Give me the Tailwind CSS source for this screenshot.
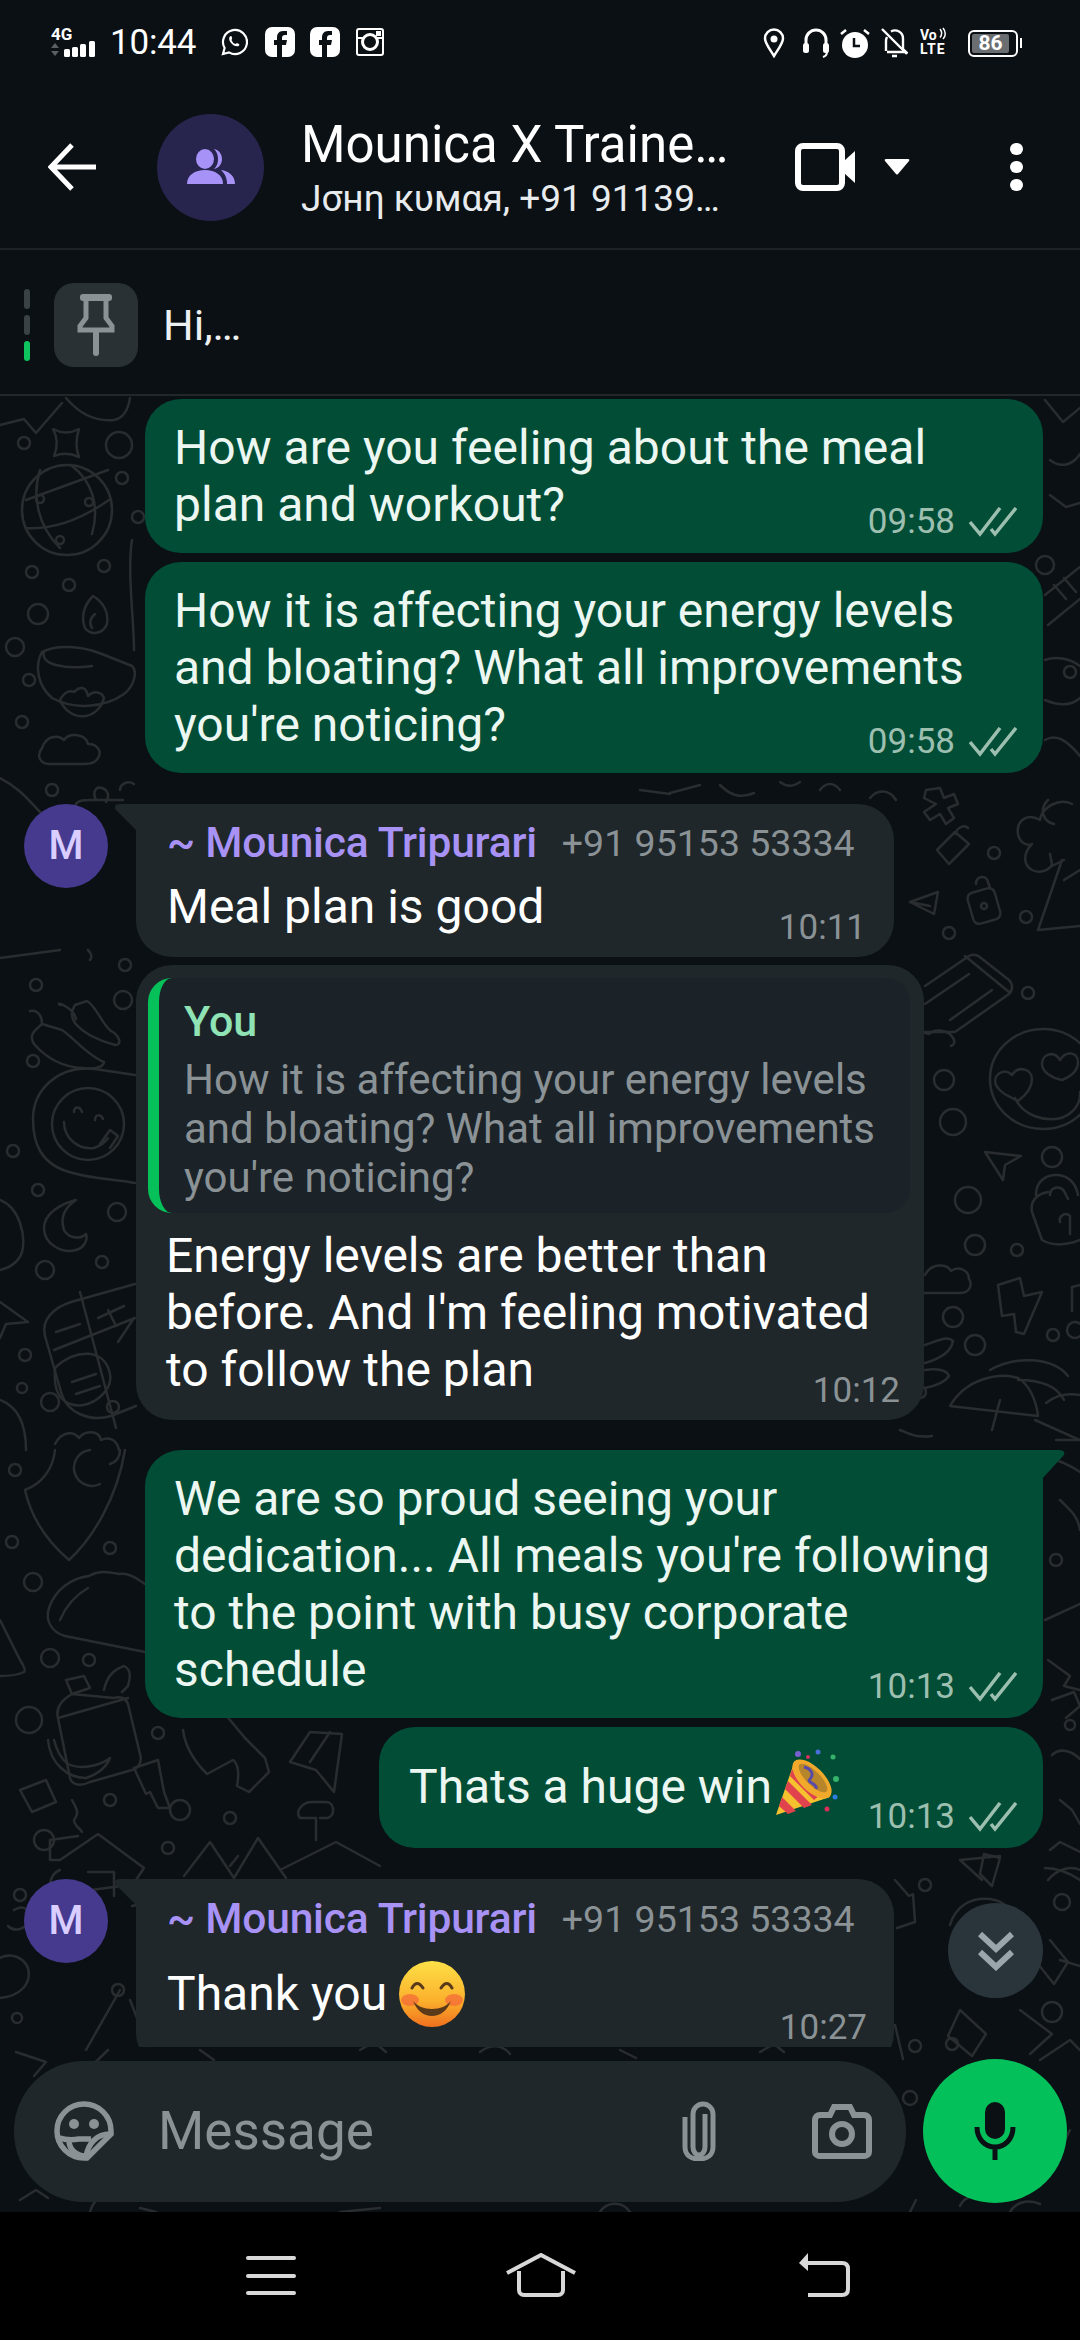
<!DOCTYPE html>
<html lang="en">
<head>
  <meta charset="UTF-8">
  <meta name="viewport" content="width=device-width,initial-scale=1">
  <title>Mounica X Trainer</title>
  <script src="https://cdn.jsdelivr.net/npm/@tailwindcss/browser@4"></script>
</head>
<body class="bg-black font-['Roboto',sans-serif] text-white">
<div class="w-[1080px] h-[2340px] overflow-hidden flex flex-col bg-[#0b1014]">

  <!-- status bar -->
  <div class="h-[60px] shrink-0 flex items-center relative pt-[18px]">
    <div class="w-[51px]"></div>
    <svg width="47" height="34" viewBox="0 0 47 34" class="mt-[4px]">
      <text x="0" y="16" font-size="17" font-weight="700" fill="#fff" font-family="Roboto">4G</text>
      <g transform="translate(0 3)">
      <path d="M4 16l4 5H0zM4 29l4-5H0z" fill="#5a5f62"/>
      <rect x="13" y="22" width="6" height="8" rx="1.5" fill="#fff"/><rect x="21" y="20" width="6" height="10" rx="1.5" fill="#fff"/><rect x="29" y="17" width="6" height="13" rx="1.5" fill="#fff"/><rect x="38" y="14" width="6" height="16" rx="1.5" fill="#fff"/>
      </g>
    </svg>
    <span class="ml-[12px] text-[35px] leading-[40px] mt-[8px] tracking-[-0.2px]">10:44</span>
    <svg width="28" height="28" viewBox="0 0 28 28" class="ml-[24px] mt-[6px]" fill="none" stroke="#fff" stroke-width="2.2">
      <path d="M3 26l1.6-6A12 12 0 1 1 9 24.4z"/><path d="M9.5 9c1-1.500 2-1 2.500.5.5 1.500-.5 2-.5 2.500a6 6 0 0 0 4 4c.5 0 1-1 2.500-.5s2 1.500.5 2.500c-4 2-11-5-9-9z" fill="#fff" stroke="none"/>
    </svg>
    <svg width="30" height="30" viewBox="0 0 30 30" class="ml-[17px] mt-[6px]"><rect width="30" height="30" rx="7" fill="#fff"/><path d="M17 30V18h4l1-5h-5v-2c0-2 1-3 3-3h2V4h-4c-4 0-6 3-6 6v3H9v5h3v12z" fill="#0b1014"/></svg>
    <svg width="30" height="30" viewBox="0 0 30 30" class="ml-[15px] mt-[6px]"><rect width="30" height="30" rx="7" fill="#fff"/><path d="M17 30V18h4l1-5h-5v-2c0-2 1-3 3-3h2V4h-4c-4 0-6 3-6 6v3H9v5h3v12z" fill="#0b1014"/></svg>
    <svg width="28" height="28" viewBox="0 0 28 28" class="ml-[16px] mt-[6px]" fill="none" stroke="#fff" stroke-width="2"><rect x="1" y="1" width="26" height="26" rx="2"/><circle cx="14" cy="14" r="7.500" stroke-width="3"/><rect x="20" y="3" width="5" height="5" fill="#fff" stroke="none"/><path d="M1 10h6M21 10h6" stroke-width="2"/></svg>

    <div class="absolute left-[763px] top-[28px] flex">
      <svg width="22" height="30" viewBox="0 0 22 30" fill="none" stroke="#fff" stroke-width="2.500"><path d="M11 28C6 20 2 15 2 10.500a9 9 0 0 1 18 0C20 15 16 20 11 28z"/><circle cx="11" cy="11" r="3.500" fill="#fff" stroke="none"/></svg>
      <svg width="26" height="30" viewBox="0 0 26 30" class="ml-[18px]" fill="none" stroke="#fff" stroke-width="3"><path d="M3 19V12a10 10 0 0 1 20 0v7"/><rect x="0" y="15" width="6" height="10" rx="2.500" fill="#fff" stroke="none"/><rect x="20" y="15" width="6" height="10" rx="2.500" fill="#fff" stroke="none"/><path d="M24 24c0 3-1 4-4 5" stroke-width="2"/></svg>
      <svg width="30" height="30" viewBox="0 0 30 30" class="ml-[11px]"><circle cx="15" cy="17" r="13" fill="#fff"/><path d="M14 10v8h6" fill="none" stroke="#0b1014" stroke-width="2.500"/><path d="M1 6l5-4M29 6l-5-4" stroke="#fff" stroke-width="2.500"/></svg>
      <svg width="27" height="30" viewBox="0 0 27 30" class="ml-[11px]" fill="none" stroke="#fff" stroke-width="2.400"><path d="M5 23V13c0-2 .5-3 1-4M10 3.500a8 8 0 0 1 12 7V21l3 3H6"/><path d="M1 1l25 25"/><path d="M11 28h5" stroke-width="2.500"/></svg>
      <svg width="28" height="33" viewBox="0 0 28 33" class="ml-[12px] mt-[-2px]"><text x="0" y="14" font-size="14" font-weight="700" fill="#fff" font-family="Roboto">Vo</text><path d="M20 3c2 2.500 2 6 0 8.500M23 2c3 3.500 3 8 0 11" fill="none" stroke="#fff" stroke-width="1.500"/><text x="0" y="28" font-size="14" font-weight="700" fill="#fff" font-family="Roboto" letter-spacing="1">LTE</text></svg>
      <div class="ml-[20px] mt-[2px] w-[50px] h-[27px] rounded-[6px] border-[2px] border-white p-[2px] relative">
        <div class="w-[37px] h-full bg-[#6b6e71] rounded-[2px] flex items-center justify-center text-[21px] leading-none font-bold">86</div>
        <div class="absolute right-[-6px] top-[6px] w-[2px] h-[10px] bg-white"></div>
      </div>
    </div>
  </div>

  <!-- chat header -->
  <div class="h-[190px] shrink-0 flex items-center border-b-[2px] border-[#1c2226] relative pt-[28px]">
    <svg width="48" height="48" viewBox="0 0 48 48" class="ml-[48px] mt-[-2px]" fill="none" stroke="#fff" stroke-width="5"><path d="M48 24H4M24 2L3 24l21 22"/></svg>
    <div class="ml-[61px] w-[107px] h-[107px] rounded-full bg-[#27244d] flex items-center justify-center mt-[-2px]">
      <svg width="48" height="36" viewBox="0 0 48 36" fill="#a793f7"><ellipse cx="18" cy="10" rx="9" ry="10"/><path d="M0 35c0-9 8-14 18-14s18 5 18 14z"/><path d="M27 0c5 1 8 5 8 10s-3 9-8 10c3-3 4-6 4-10s-1-7-4-10zM34 21c8 1 14 6 14 14h-8c0-6-2-10-6-14z"/></svg>
    </div>
    <div class="ml-[37px] w-[440px] mt-[-2px]">
      <div class="text-[51px] leading-[62px] whitespace-nowrap">Mounica X Traine…</div>
      <div class="text-[37px] leading-[42px] mt-[2px] whitespace-nowrap text-[#e8ecee]">Jσнη кυмαя, +91 91139…</div>
    </div>
    <svg width="60" height="48" viewBox="0 0 60 48" class="ml-[54px] mt-[-2px]"><rect x="3" y="3" width="44" height="42" rx="5" fill="none" stroke="#fff" stroke-width="6"/><path d="M49 18l11-10v32L49 30z" fill="#fff"/></svg>
    <svg width="26" height="16" viewBox="0 0 26 16" class="ml-[29px] mt-[-2px]"><path d="M2 0h22q2 0 1 2L14 15q-1 1-2 0L1 2Q0 0 2 0z" fill="#fff"/></svg>
    <div class="ml-[100px] mt-[-2px] flex flex-col gap-[6px]">
      <div class="w-[13px] h-[12px] rounded-full bg-white"></div>
      <div class="w-[13px] h-[12px] rounded-full bg-white"></div>
      <div class="w-[13px] h-[12px] rounded-full bg-white"></div>
    </div>
  </div>

  <!-- pinned message -->
  <div class="h-[146px] shrink-0 flex items-center border-b-[2px] border-[#22272a] pl-[24px] pt-[6px]">
    <div class="flex flex-col gap-[6px] w-[6px]">
      <div class="h-[20px] rounded-full bg-[#3a4246]"></div>
      <div class="h-[20px] rounded-full bg-[#3a4246]"></div>
      <div class="h-[20px] rounded-full bg-[#0ec45f]"></div>
    </div>
    <div class="ml-[24px] w-[84px] h-[84px] rounded-[20px] bg-[#2a3134] flex items-center justify-center">
      <svg width="38" height="62" viewBox="0 0 38 62" fill="none" stroke="#8a9296" stroke-width="5"><rect x="3" y="0" width="32" height="7" rx="3" fill="#8a9296" stroke="none"/><path d="M9 6v18l-6 8v4h32v-4l-6-8V6"/><rect x="16" y="36" width="6" height="26" rx="3" fill="#8a9296" stroke="none"/></svg>
    </div>
    <span class="ml-[25px] text-[43px] leading-[48px] text-[#eef1f2]">Hi,…</span>
  </div>

  <!-- conversation -->
  <div class="relative flex-1 min-h-0">

    <!-- wallpaper doodles, page coordinates -->
    <svg class="absolute inset-0" width="1080" height="1816" viewBox="0 396 1080 1816" fill="none" stroke="#292d30" stroke-width="2.500" stroke-linejoin="round" stroke-linecap="round">
      <!-- upper left -->
      <path d="M0 425l24-6 12 14 26-30M66 398c12 14 28 24 48 22 10-2 14-10 16-22"/>
      <path d="M53 429q13 7 26 0q-5 15 0 28q-13-6-25-1q6-14-1-27z"/>
      <circle cx="24" cy="443" r="6"/><circle cx="119" cy="445" r="13"/><circle cx="122" cy="478" r="6"/><circle cx="138" cy="517" r="6"/>
      <circle cx="67" cy="510" r="45"/><path d="M26 500l82-30M26 528c30 2 60-12 83-28M40 470c-8 25-3 55 20 78M72 466c20 15 28 40 20 68"/><circle cx="40" cy="499" r="4"/><circle cx="89" cy="502" r="4"/><circle cx="60" cy="540" r="4"/>
      <circle cx="32" cy="572" r="6"/><circle cx="104" cy="566" r="6"/><circle cx="69" cy="585" r="6"/><circle cx="38" cy="614" r="10"/><circle cx="15" cy="647" r="9"/><circle cx="29" cy="680" r="6"/><circle cx="22" cy="722" r="6"/>
      <path d="M132 540c-5 30 2 80 2 110"/>
      <path d="M93 596c-10 10-12 22-8 32 6 8 18 6 22-4 2-12-4-22-14-28z"/><path d="M95 614c-5 4-6 10-3 14"/>
      <path d="M42 652c15-8 40-6 60 2l30 12c6 6 2 20-8 28-20 14-50 16-72 4-14-12-18-32-10-46z"/><path d="M44 652c-4 12 20 18 48 14"/>
      <path d="M60 700c4-8 10-10 14-8 6-6 12-6 14 4 6-6 14-4 16 2-2 8-8 16-18 18-12 2-22-6-26-16z"/>
      <path d="M42 748c4-12 16-14 22-8 6-8 22-6 24 4 10 0 14 8 10 14-2 4-8 6-14 6H50c-10 0-14-8-8-16z"/>
      <circle cx="52" cy="790" r="6"/>
      <path d="M75 808c0-8 8-8 18-8h30M96 800c-4-8 0-14 6-12s8 8 4 14M120 790c0-6 8-10 14-6"/>
      <path d="M0 778c20 10 30 24 40 34"/>

      <!-- left, middle -->
      <path d="M0 958l60-8M88 950c4 4 4 8 2 10"/>
      <circle cx="36" cy="985" r="6"/><circle cx="123" cy="1000" r="9"/><circle cx="33" cy="1061" r="6"/><circle cx="125" cy="965" r="6"/>
      <path d="M60 1005c-6-4 14 2 16 14M30 1011c8-2 12 6 12 12M75 1005c-4 6-4 12 0 18 8 10 24 18 40 22 8 0 4-10-4-14-10-8-14-24-24-30z"/>
      <path d="M42 1024c-6 6-14 10-8 20 12 14 30 24 50 24 12 2 20-2 20-6-16-6-30-24-42-32z"/>
      <path d="M135 1075l-40-6c-36-4-62 20-62 50 0 22 6 46 40 54 20 6 42 6 62 10"/>
      <circle cx="88" cy="1124" r="36"/><path d="M64 1122c0 16 14 28 30 26 6-2 10-4 14-10M74 1112c0-6 6-6 8 0M95 1120c0-6 6-6 8-1M100 1144l10-14 8 6-8 12"/>
      <path d="M76 1200c-16 4-32 14-32 28 0 16 18 26 32 22 8-2 12-10 10-16-6 6-18 4-22-4-4-12 0-22 12-30z"/>
      <circle cx="13" cy="1151" r="6"/><circle cx="38" cy="1190" r="6"/><circle cx="117" cy="1212" r="9"/><circle cx="102" cy="1262" r="6"/><circle cx="45" cy="1270" r="9"/><circle cx="25" cy="1355" r="6"/><circle cx="22" cy="1388" r="5"/><circle cx="50" cy="1402" r="9"/><circle cx="113" cy="1407" r="6"/>
      <path d="M0 1200c20 8 26 36 22 52-4 12-14 16-22 18M0 1302l28 20-22 2-6 14"/>
      <path d="M135 1284l-64 18c-18 6-30 18-26 34l16 56c6 22 30 30 50 24l25-10"/><path d="M80 1292l36 136M54 1350l81-32M55 1368c20-20 50-20 55 6 4 18-24 40-44 28-10-6-12-18-11-34zM56 1332l24-8M72 1382l24-8M76 1394l24-8M98 1318l26-12M108 1310l8 16M118 1342l16-24"/>
      <path d="M0 1400c16 6 26 22 26 50M55 1444c6-12 18-14 24-6 6-8 20-8 22 2 8-4 16 0 18 10"/>

      <!-- lower left -->
      <path d="M25 1490c8 36 30 58 44 70 24-22 48-62 56-110M25 1490c16-6 28-20 30-40M90 1450a18 18 0 1 0 10 34M120 1450c0 8-4 12-10 14"/>
      <circle cx="15" cy="1470" r="6"/><circle cx="12" cy="1542" r="6"/><circle cx="110" cy="1548" r="6"/><circle cx="33" cy="1582" r="9"/><circle cx="50" cy="1658" r="9"/><circle cx="89" cy="1660" r="6"/><circle cx="29" cy="1720" r="13"/><circle cx="158" cy="1733" r="6"/><circle cx="110" cy="1800" r="6"/><circle cx="180" cy="1810" r="10"/><circle cx="230" cy="1818" r="6"/><circle cx="44" cy="1840" r="10"/><circle cx="168" cy="1848" r="6"/>
      <path d="M145 1652l-80-16c-14-4-20-16-16-28 6-18 22-30 40-32 10-6 20-4 30-2 10-2 20 6 26 10M60 1620c6-14 14-24 28-32"/>
      <path d="M0 1620l20 40c4 6 6 10 4 12-8 4-16 4-24 4"/>
      <path d="M66 1680l18-4 6 12-18 6zM72 1694c-14 8-16 16-14 24l12 60c2 8 12 8 20 4l42-12c8-2 10-10 8-16l-12-50c-2-6-8-8-14-6zM58 1718l70-20M104 1690c2-10 8-20 20-24 8 4 6 12 4 20l-6 6"/>
      <path d="M48 1740c2 24 20 38 38 38 12-4 20-10 24-20-10 8-30 12-42 6-8-6-12-16-14-24"/>
      <path d="M134 1768l24-8 6 32 6 16-12 0-8-16-4 2-12-26z"/><path d="M20 1790l26-10 10 22-24 10z"/>
      <path d="M72 1800c4 8 8 12 2 20 0 6 6 8 8 12"/>
      <path d="M60 1860l38-26 46 34-12 18M60 1860l-10 0 0-20 28-4M60 1870c-12 4-14 24 0 30 6 2 14 0 16-8l60-8c10 4 6 22-4 22"/>
      <path d="M88 1872h26v24"/>
      <path d="M183 1730c2 16 10 30 24 44l26-14c6 4 6 16 4 26l12 6 20-20-4-14-20-20-30-36"/>
      <path d="M310 1732l-20 30 26 8 18 22 8-58zM310 1762l20-30"/>
      <path d="M184 1876l26-34 24 36 24-40 28 40M230 1866l8-10"/>
      <path d="M280 1870l56-28 44 24M316 1840v-22h-16c-6-8 4-16 12-16h14c8 0 10 12 2 16h-8"/>

      <!-- lower right -->
      <path d="M900 1430c10 4 16 8 32 6M1060 1500c10 10 18 16 20 30M1048 1458c10 2 20 6 32 14M1056 1440l24 0"/>
      <path d="M1048 1660l22 16-6 10 16 4M1052 1700l22-8 6 14-14 12M1045 1620l35-16"/>
      <circle cx="1056" cy="1560" r="6"/>
      <path d="M1050 1850l10-8 20 10M1045 1868c10 0 24 4 35 12"/>
      <path d="M960 1860l22 20M1000 1858l-16-4 -4 20 12 12zM960 1860l40-4"/>
      <path d="M1048 1880c10-12 24-14 32-10"/>
      <circle cx="1062" cy="1902" r="8"/><circle cx="925" cy="1885" r="6"/>
      <path d="M895 1880l14 16 4-2 2 28-18 6"/>
      <path d="M950 1925c6-20 22-28 40-26 14 2 22 10 26 22"/>
      <path d="M1050 1940l18 22-14 22-16-20M1060 1960l20 6"/>
      <circle cx="1052" cy="2012" r="10"/><circle cx="952" cy="2044" r="6"/><circle cx="915" cy="2046" r="6"/><circle cx="910" cy="2098" r="7"/>
      <path d="M960 2010l26 24-14 22-24-20zM1020 2010l32 24-22 20"/>
      <path d="M895 2025l8 34M1040 2060l30-20 10 10M1070 2130c-6 10-8 18-10 30"/>
      <path d="M108 2050c-10 10-20 20-30 24M16 2052l30 10-12 14M200 2050l14 10M360 2050l14-8 12 10M480 2052c10-8 22-8 30 2M620 2050l16 8M760 2052l14-8 10 8"/>
      <path d="M120 1990l-34 60M130 2000l18 46"/>
      <path d="M14 1910c10-6 18 0 14 12-4 8-14 10-20 4M0 1958c12-6 24 0 28 10 4 16-8 28-28 30"/><circle cx="20" cy="1895" r="6"/><circle cx="118" cy="1990" r="6"/><circle cx="17" cy="2018" r="5"/>
      <path d="M20 2200l16-10 12 8M90 2212c4-14 14-20 24-20M140 2208l16 4M340 2212l40-4M600 2212c6-10 22-12 30 0M910 2212l6-12M960 2206c4-10 20-14 28-6M1010 2212c4-8 16-14 30-8"/>

      <!-- right column -->
      <path d="M1045 400l18 22 17-14M1050 460c10 8 22 6 30-6M1050 495l16 12 14-4"/>
      <circle cx="1045" cy="565" r="9"/><circle cx="1070" cy="672" r="6"/>
      <path d="M1045 595l35-28M1048 625l32-26M1054 585l12 14M1064 578l12 14M1045 660c10-4 24-2 35 6M1045 700c14 6 26 6 35-2M1045 740c10-6 20-2 35 16"/>
      <path d="M640 790l30 4M700 785l-30 8M720 785c10 10 20 14 34 8M780 782c8 6 14 4 20 0M820 790c6-8 14-8 20 0M870 798c8-10 20-8 26 2"/>
      <path d="M926 790l-2 8 12 6-12 8 6 8 10-6 6 10 8-6-6-10 10-4-4-10-10 4-4-10z"/>
      <path d="M937 850l18-18 14 12-20 20zM956 834c0-6 8-10 12-6"/>
      <circle cx="994" cy="853" r="6"/><circle cx="1026" cy="917" r="6"/><circle cx="949" cy="933" r="6"/><circle cx="1028" cy="993" r="6"/>
      <path d="M910 902l28-10-4 22zM910 902l20 4"/>
      <rect x="970" y="890" width="28" height="32" rx="6" transform="rotate(-16 984 906)"/><path d="M976 884c0-8 10-10 12-2l2 6"/><circle cx="984" cy="906" r="3"/>
      <path d="M1040 820c-14-8-24 2-22 14 2 10 10 12 14 10-8 8-10 20 0 26 8 4 18 0 20-6l-2-10M1040 820c2-14 20-22 32-16M1048 800c-10 10-4 22 6 24M1052 866l12-6"/>
      <path d="M1062 860l-24 70 42-4M1064 880l16-10"/>
      <path d="M925 986l44-30c4-2 8-2 12 2l28 22c4 4 4 10 0 14l-54 38H915M965 956l44 36M925 1004l44-30M950 1020l42-30"/>
      <path d="M905 1038c8-6 18-6 24-4 6-6 20-4 24 4 4 6-2 8-2 8"/>
      <circle cx="944" cy="1080" r="10"/><circle cx="953" cy="1122" r="13"/>
      <ellipse cx="1043" cy="1079" rx="53" ry="50"/>
      <path d="M1012 1075c-8-8-20 0-16 10 4 8 14 12 22 16 8-6 14-14 14-22 0-10-14-14-20-4zM1060 1060c-6-10-18-6-18 4 0 8 10 14 20 16 10-4 16-10 16-18 0-10-12-12-18-2zM1015 1098c8 18 30 24 46 20 12-4 20-14 19-26"/>
      <path d="M985 1152l36 4-16 9-2 15z"/>
      <circle cx="1052" cy="1157" r="10"/>
      <circle cx="968" cy="1200" r="13"/><circle cx="975" cy="1245" r="10"/><circle cx="1017" cy="1250" r="6"/>
      <path d="M1036 1195c0-14 10-20 20-20 12 0 20 8 22 20M1050 1195c0-8 10-10 14-4l4 8M1048 1192c-12 2-18 10-16 20l10 28c14 8 28 4 38 0M1060 1222a6 6 0 0 1 10-6v18"/>
      <path d="M998 1285l22-7 4 18 18-4-18 42-8-2-2-18-12 2z"/>
      <circle cx="1053" cy="1335" r="6"/>
      <path d="M925 1275c6-12 22-12 26-4 8-6 18 0 18 8 4 6 0 14-8 14-12 0-22 0-36 0"/><circle cx="953" cy="1317" r="10"/><circle cx="975" cy="1345" r="10"/><circle cx="920" cy="1392" r="6"/>
      <path d="M925 1345c12-4 22-10 28-4-2 12-14 18-28 22M925 1370c12-2 22 0 24 6-4 6-14 10-24 12"/>
      <path d="M950 1406c16-28 50-34 68-28 10 6 18 20 20 38zM990 1370c24-14 62-14 78 6M1080 1395c-12-2-24 0-34 8M1018 1380c20 0 38 4 46 20"/>
      <path d="M1000 1400l-8 30M1035 1420l45 20"/>
      <circle cx="1075" cy="1330" r="8"/>
      <path d="M1080 1285l-8 2 0 24"/>
      <circle cx="1070" cy="1725" r="5"/>
      <path d="M1052 1755c8-8 20-4 28 4M1060 1800l12 10 8 14"/>
    </svg>

    <div class="relative h-[1651px] overflow-hidden flex flex-col pt-[3px]">

      <div class="ml-[145px] w-[898px] h-[154px] rounded-[36px] bg-[#024d36] px-[29px] py-[20px] text-[48px] leading-[57px] text-[#ecf7f2] relative shrink-0">
        <p>How are you feeling about the meal<br>plan and workout?</p>
        <div class="absolute right-[26px] bottom-[11px] flex items-center gap-[14px] text-[35px] leading-[40px] text-[#9dbfb0]">
          <span>09:58</span>
          <svg width="48" height="30" viewBox="0 0 48 30" fill="none" stroke="#9dbfb0" stroke-width="3.500"><path d="M1 15l10 12L31 1M22 22l4 5L47 1"/></svg>
        </div>
      </div>

      <div class="ml-[145px] mt-[9px] w-[898px] h-[211px] rounded-[36px] bg-[#024d36] px-[29px] py-[20px] text-[48px] leading-[57px] text-[#ecf7f2] relative shrink-0">
        <p>How it is affecting your energy levels<br>and bloating? What all improvements<br>you're noticing?</p>
        <div class="absolute right-[26px] bottom-[11px] flex items-center gap-[14px] text-[35px] leading-[40px] text-[#9dbfb0]">
          <span>09:58</span>
          <svg width="48" height="30" viewBox="0 0 48 30" fill="none" stroke="#9dbfb0" stroke-width="3.500"><path d="M1 15l10 12L31 1M22 22l4 5L47 1"/></svg>
        </div>
      </div>

      <div class="mt-[31px] flex shrink-0">
        <div class="ml-[24px] w-[84px] h-[84px] rounded-full bg-[#453a8e] flex items-center justify-center text-[40px] font-medium text-[#d9ceff]">M</div>
        <div class="ml-[28px] w-[758px] h-[153px] rounded-[36px] rounded-tl-none bg-[#1f272a] pl-[31px] pt-[14px] relative">
          <svg width="24" height="28" viewBox="0 0 24 28" class="absolute left-[-22px] top-0"><path d="M24 0H6C1 0 0 3 2 6l22 22z" fill="#1f272a"/></svg>
          <div class="flex items-center h-[50px]">
            <span class="text-[42.5px] font-medium text-[#a892f5] tracking-[-0.2px]">~ Mounica Tripurari</span>
            <span class="ml-[25px] text-[37.5px] text-[#8a9296]">+91 95153 53334</span>
          </div>
          <p class="mt-[10px] text-[48px] leading-[57px]">Meal plan is good</p>
          <span class="absolute right-[28px] bottom-[9px] text-[35px] leading-[40px] text-[#8a9296]">10:11</span>
        </div>
      </div>

      <div class="ml-[136px] mt-[8px] w-[788px] h-[455px] rounded-[36px] bg-[#1f272a] pt-[13px] relative shrink-0">
        <div class="ml-[12px] w-[762px] h-[235px] rounded-[24px] bg-[#1b2329] border-l-[11px] border-[#06c15a] pl-[25px] pt-[18px] overflow-hidden">
          <div class="text-[43px] leading-[50px] font-medium text-[#8fe3b5]">You</div>
          <p class="mt-[9px] text-[42px] leading-[49px] text-[#8a9296] whitespace-nowrap">How it is affecting your energy levels<br>and bloating? What all improvements<br>you're noticing?</p>
        </div>
        <p class="ml-[30px] mt-[14px] text-[48px] leading-[57px]">Energy levels are better than<br>before. And I'm feeling motivated<br>to follow the plan</p>
        <span class="absolute right-[24px] bottom-[9px] text-[35px] leading-[40px] text-[#8a9296]">10:12</span>
      </div>

      <div class="ml-[145px] mt-[30px] w-[898px] h-[268px] rounded-[36px] rounded-tr-none bg-[#024d36] px-[29px] py-[20px] text-[48px] leading-[57px] text-[#ecf7f2] relative shrink-0">
        <svg width="24" height="30" viewBox="0 0 24 30" class="absolute right-[-22px] top-0"><path d="M0 0h18c5 0 7 3 4 6L0 30z" fill="#024d36"/></svg>
        <p>We are so proud seeing your<br>dedication... All meals you're following<br>to the point with busy corporate<br>schedule</p>
        <div class="absolute right-[26px] bottom-[11px] flex items-center gap-[14px] text-[35px] leading-[40px] text-[#9dbfb0]">
          <span>10:13</span>
          <svg width="48" height="30" viewBox="0 0 48 30" fill="none" stroke="#9dbfb0" stroke-width="3.500"><path d="M1 15l10 12L31 1M22 22l4 5L47 1"/></svg>
        </div>
      </div>

      <div class="ml-[379px] mt-[9px] w-[664px] h-[121px] rounded-[36px] bg-[#024d36] pl-[30px] pt-[28px] text-[48px] leading-[57px] text-[#ecf7f2] relative shrink-0">
        <p class="flex items-center">Thats a huge win
          <svg width="68" height="68" viewBox="0 0 68 68" class="ml-[2px] mt-[-6px]">
            <path d="M2 66L20 14l36 34z" fill="#f5c12e"/>
            <path d="M8 48l14 14-8 3-9-8zM14 32l24 24-8 3-19-19zM18 20l28 26-6 5-24-24z" fill="#e0434e"/>
            <ellipse cx="38" cy="30" rx="12" ry="25" transform="rotate(-45 38 30)" fill="#f0a92a"/>
            <ellipse cx="39" cy="29" rx="7" ry="19" transform="rotate(-45 39 29)" fill="#b8862a"/>
            <path d="M30 18c8 2 10 8 6 12s8 4 6 10" fill="none" stroke="#5a4aa8" stroke-width="3"/>
            <circle cx="24" cy="5" r="3" fill="#7a5fd0"/><circle cx="44" cy="3" r="2.500" fill="#4a6fd8"/><circle cx="59" cy="8" r="2.500" fill="#35b36a"/><circle cx="62" cy="30" r="3" fill="#35b36a"/><circle cx="61" cy="48" r="2.500" fill="#2d7de0"/><circle cx="53" cy="60" r="2.500" fill="#d8305a"/><circle cx="34" cy="8" r="2" fill="#d8305a"/>
          </svg>
        </p>
        <div class="absolute right-[26px] bottom-[11px] flex items-center gap-[14px] text-[35px] leading-[40px] text-[#9dbfb0]">
          <span>10:13</span>
          <svg width="48" height="30" viewBox="0 0 48 30" fill="none" stroke="#9dbfb0" stroke-width="3.500"><path d="M1 15l10 12L31 1M22 22l4 5L47 1"/></svg>
        </div>
      </div>

      <div class="mt-[31px] flex shrink-0">
        <div class="ml-[24px] w-[84px] h-[84px] rounded-full bg-[#453a8e] flex items-center justify-center text-[40px] font-medium text-[#d9ceff]">M</div>
        <div class="ml-[28px] w-[758px] h-[190px] rounded-[36px] rounded-tl-none bg-[#1f272a] pl-[31px] pt-[15px] relative">
          <svg width="24" height="28" viewBox="0 0 24 28" class="absolute left-[-22px] top-0"><path d="M24 0H6C1 0 0 3 2 6l22 22z" fill="#1f272a"/></svg>
          <div class="flex items-center h-[50px]">
            <span class="text-[42.5px] font-medium text-[#a892f5] tracking-[-0.2px]">~ Mounica Tripurari</span>
            <span class="ml-[25px] text-[37.5px] text-[#8a9296]">+91 95153 53334</span>
          </div>
          <p class="mt-[15px] text-[48px] leading-[70px] flex items-center">Thank you
            <svg width="68" height="68" viewBox="0 0 68 68" class="ml-[11px]">
              <defs>
                <linearGradient id="face" x1="0" y1="0" x2="0" y2="1"><stop offset="0%" stop-color="#fde047"/><stop offset="60%" stop-color="#fbb02c"/><stop offset="100%" stop-color="#f0701e"/></linearGradient>
              </defs>
              <circle cx="34" cy="34" r="33" fill="url(#face)"/>
              <ellipse cx="12" cy="40" rx="9" ry="6" fill="#f4583a" opacity=".6"/><ellipse cx="56" cy="40" rx="9" ry="6" fill="#f4583a" opacity=".6"/>
              <path d="M14 28q5-9 11 0M43 28q6-9 11 0" fill="none" stroke="#5b3a1a" stroke-width="3" stroke-linecap="round"/>
              <path d="M15 41c4 10 11 15 19 15s15-5 19-15c-4 5-11 8-19 8s-15-3-19-8z" fill="#5b3a1a"/>
            </svg>
          </p>
          <span class="absolute right-[27px] top-[129px] text-[35px] leading-[40px] text-[#8a9296]">10:27</span>
        </div>
      </div>
    </div>

    <!-- jump to latest -->
    <div class="absolute left-[948px] top-[1507px] w-[95px] h-[95px] rounded-full bg-[#2a353b] flex items-center justify-center">
      <svg width="36" height="40" viewBox="0 0 36 40" fill="none" stroke="#9ba6ab" stroke-width="6"><path d="M2 3l16 15L34 3M2 21l16 15 16-15"/></svg>
    </div>

    <!-- composer -->
    <div class="relative flex items-center mt-[12px] pl-[14px]">
      <div class="w-[892px] h-[141px] rounded-[70px] bg-[#1f272a] flex items-center pl-[40px]">
        <svg width="60" height="60" viewBox="0 0 60 60" fill="none" stroke="#8a9296" stroke-width="5.500"><path d="M30 3c15 0 27 12 27 27v3L33 57h-3C15 57 3 45 3 30S15 3 30 3z"/><circle cx="20" cy="23" r="5" fill="#8a9296" stroke="none"/><circle cx="40" cy="23" r="5" fill="#8a9296" stroke="none"/><path d="M5 37c7 2 14 2 20 1h12"/><path d="M15 39c0 9 6 15 15 16"/><path d="M56 33c-13 0-22 9-24 23"/></svg>
        <span class="ml-[44px] w-[522px] text-[53px] leading-[60px] text-[#8a9296]">Message</span>
        <svg width="38" height="60" viewBox="0 0 38 60" fill="none" stroke="#8a9296" stroke-width="5"><path d="M13 16v30c0 5 3 8 6 8s6-3 6-8V13M5 16v30c0 8 6 12 14 12s14-4 14-12V13C33 7 28 3 23 3S13 7 13 13v3"/></svg>
        <svg width="60" height="56" viewBox="0 0 60 56" class="ml-[94px]" fill="none" stroke="#8a9296" stroke-width="6"><path d="M3 17c0-3 2-5 5-5h10l4-8h16l4 8h10c3 0 5 2 5 5v32c0 2-2 4-4 4H7c-2 0-4-2-4-4z"/><circle cx="30" cy="31" r="10"/></svg>
      </div>
      <div class="ml-[17px] w-[144px] h-[144px] rounded-full bg-[#04c05b] flex items-center justify-center">
        <svg width="42" height="58" viewBox="0 0 42 58" fill="none" stroke="#0b1014" stroke-width="5"><rect x="11" y="0" width="20" height="37" rx="10" fill="#0b1014" stroke="none"/><path d="M3 25c0 12 8 20 18 20s18-8 18-20M21 45v13"/></svg>
      </div>
    </div>
  </div>

  <!-- android nav bar -->
  <div class="h-[128px] shrink-0 bg-black relative flex">
    <div class="ml-[246px] mt-[44px] w-[50px] h-[39px] flex flex-col justify-between">
      <div class="h-[4px] bg-[#d8d8d8] rounded-full"></div>
      <div class="h-[4px] bg-[#d8d8d8] rounded-full"></div>
      <div class="h-[4px] bg-[#d8d8d8] rounded-full"></div>
    </div>
    <svg width="70" height="44" viewBox="0 0 70 44" class="ml-[210px] mt-[41px]" fill="none" stroke="#d8d8d8" stroke-width="4"><path d="M1 20L35 2l34 18"/><path d="M13 18v19c0 3 2 5 5 5h34c3 0 5-2 5-5V18"/></svg>
    <svg width="52" height="44" viewBox="0 0 52 44" class="ml-[222px] mt-[41px]" fill="none" stroke="#d8d8d8" stroke-width="4"><path d="M6 10h38c4 0 6 2 6 6v20c0 4-2 6-6 6H10"/><path d="M10 0v18L1 10z" fill="#d8d8d8" stroke="none"/></svg>
  </div>
</div>
</body>
</html>
